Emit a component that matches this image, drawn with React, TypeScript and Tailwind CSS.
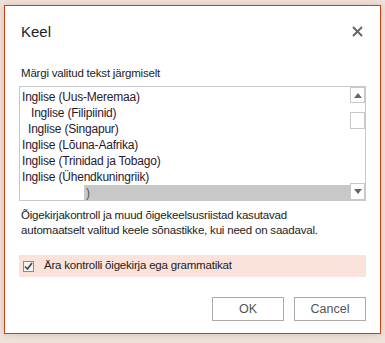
import React from "react";

const items = [
  { label: "Inglise (Uus-Meremaa)", indent: "pl-[2px]" },
  { label: "Inglise (Filipiinid)", indent: "pl-[11px]" },
  { label: "Inglise (Singapur)", indent: "pl-[8px]" },
  { label: "Inglise (Lõuna-Aafrika)", indent: "pl-[2px]" },
  { label: "Inglise (Trinidad ja Tobago)", indent: "pl-[2px]" },
  { label: "Inglise (Ühendkuningriik)", indent: "pl-[2px]" },
];

export default function App() {
  return (
    <div
      className="w-[385px] h-[343px] bg-[#efe3dc] pt-[5px] pl-[4px] overflow-hidden"
      style={{ fontFamily: '"Liberation Sans", Arial, sans-serif' }}
    >
      <div className="w-[377px] h-[329px] bg-white border border-[#c4421c] shadow-[0_0_8px_#dcbcab] flex flex-col">
        {/* header */}
        <div className="flex items-start justify-between pl-[16px] pr-[17px] pt-[16px]">
          <p className="text-[15px] leading-[20px] text-[#1e1e1e]">Keel</p>
          <svg width="11" height="11" viewBox="0 0 11 11" className="mt-[4px]">
            <path d="M1 1L10 10M10 1L1 10" stroke="#666" strokeWidth="2" />
          </svg>
        </div>

        <p className="pl-[16px] mt-[24px] text-[11.5px] leading-[14px] text-[#222] tracking-[-0.2px]">
          Märgi valitud tekst järgmiselt
        </p>

        {/* listbox */}
        <div className="ml-[14px] mt-[6px] w-[347px] h-[115px] border border-[#c6c9cd] flex">
          <div className="flex-1 flex flex-col pt-[2px] text-[12px] text-[#2a1830] tracking-[-0.2px]">
            {items.map((it) => (
              <div key={it.label} className={`h-[16px] leading-[16px] ${it.indent}`}>
                {it.label}
              </div>
            ))}
            <div className="h-[17px] flex">
              <div className="w-[64px]"></div>
              <div className="flex-1 bg-[#c8c8c8] leading-[16px] pl-[2px] text-[#555]">)</div>
            </div>
          </div>
          <div className="w-[15px] flex flex-col justify-between">
            <div className="h-[16px] border border-[#c6c9cd] flex items-center justify-center">
              <svg width="8" height="5" viewBox="0 0 8 5">
                <path d="M0 5L4 0L8 5Z" fill="#666" />
              </svg>
            </div>
            <div className="h-[17px] border border-[#c6c9cd] mb-[45px]"></div>
            <div className="h-[17px] border border-[#c6c9cd] flex items-center justify-center">
              <svg width="8" height="5" viewBox="0 0 8 5">
                <path d="M0 0L8 0L4 5Z" fill="#666" />
              </svg>
            </div>
          </div>
        </div>

        <p className="pl-[16px] mt-[7px] text-[11.5px] leading-[15px] text-[#222] tracking-[-0.2px]">
          Õigekirjakontroll ja muud õigekeelsusriistad kasutavad
          <br />
          automaatselt valitud keele sõnastikke, kui need on saadaval.
        </p>

        <div className="ml-[14px] mt-[17px] w-[347px] h-[22px] bg-[#fbe3dc] flex items-center pl-[4px]">
          <div className="w-[11px] h-[11px] border border-[#8a8a8a] bg-[#f4f4f4] flex items-center justify-center">
            <svg width="9" height="8" viewBox="0 0 9 8">
              <path d="M1 4.5L3.5 7L8 1" stroke="#444" strokeWidth="1.6" fill="none" />
            </svg>
          </div>
          <span className="ml-[10px] text-[11.5px] text-[#222] tracking-[-0.2px]">
            Ära kontrolli õigekirja ega grammatikat
          </span>
        </div>

        <div className="flex justify-end gap-[10px] pr-[14px] mt-[20px]">
          <button className="w-[72px] h-[24px] border border-[#ababab] bg-white text-[12.5px] text-[#555]">
            OK
          </button>
          <button className="w-[72px] h-[24px] border border-[#ababab] bg-white text-[12.5px] text-[#555]">
            Cancel
          </button>
        </div>
      </div>
    </div>
  );
}
